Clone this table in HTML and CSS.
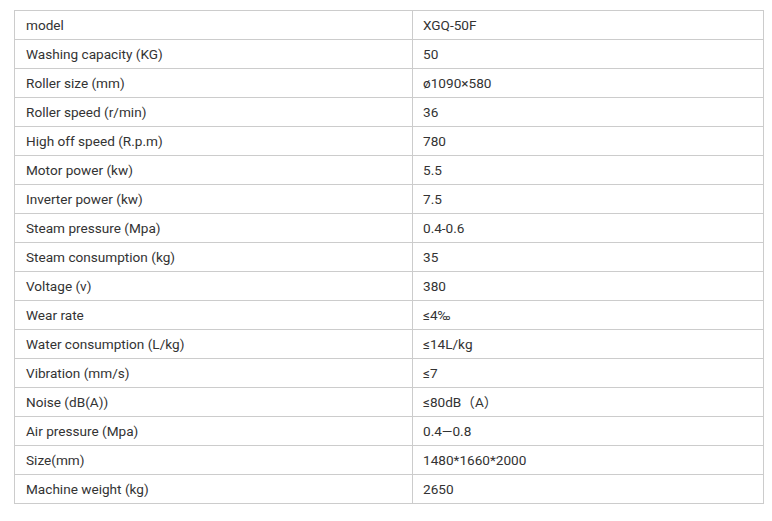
FILE: index.html
```html
<!DOCTYPE html>
<html>
<head>
<meta charset="utf-8">
<link rel="stylesheet" href="styles.css">
</head>
<body>
<table class="spec">
<colgroup><col class="c1"><col class="c2"></colgroup>
<tbody>
<tr><td>model</td><td>XGQ-50F</td></tr>
<tr><td>Washing capacity (KG)</td><td>50</td></tr>
<tr><td>Roller size (mm)</td><td>ø1090×580</td></tr>
<tr><td>Roller speed (r/min)</td><td>36</td></tr>
<tr><td>High off speed (R.p.m)</td><td>780</td></tr>
<tr><td>Motor power (kw)</td><td>5.5</td></tr>
<tr><td>Inverter power (kw)</td><td>7.5</td></tr>
<tr><td>Steam pressure (Mpa)</td><td>0.4-0.6</td></tr>
<tr><td>Steam consumption (kg)</td><td>35</td></tr>
<tr><td>Voltage (v)</td><td>380</td></tr>
<tr><td>Wear rate</td><td>≤4‰</td></tr>
<tr><td>Water consumption (L/kg)</td><td>≤14L/kg</td></tr>
<tr><td>Vibration (mm/s)</td><td>≤7</td></tr>
<tr><td>Noise (dB(A))</td><td>≤80dB（A）</td></tr>
<tr><td>Air pressure (Mpa)</td><td>0.4—0.8</td></tr>
<tr><td>Size(mm)</td><td>1480*1660*2000</td></tr>
<tr><td>Machine weight (kg)</td><td>2650</td></tr>
</tbody>
</table>
</body>
</html>
```
FILE: styles.css
```css
html, body {
  margin: 0;
  background: #fff;
}
body {
  padding: 10px 0 0 14px;
  font-family: Roboto, "Noto Sans CJK SC", sans-serif;
  font-size: 13.6px;
  color: #333;
}
.spec {
  border-collapse: collapse;
  table-layout: fixed;
  width: 749px;
}
.c1 { width: 398px; }
.c2 { width: 351px; }
.spec td {
  border: 1px solid #ccc;
  height: 29px;
  padding: 0 0 0 10px;
  box-sizing: border-box;
  vertical-align: middle;
  line-height: 16px;
  white-space: nowrap;
}
.spec tr td:first-child { padding-left: 11px; }
```
